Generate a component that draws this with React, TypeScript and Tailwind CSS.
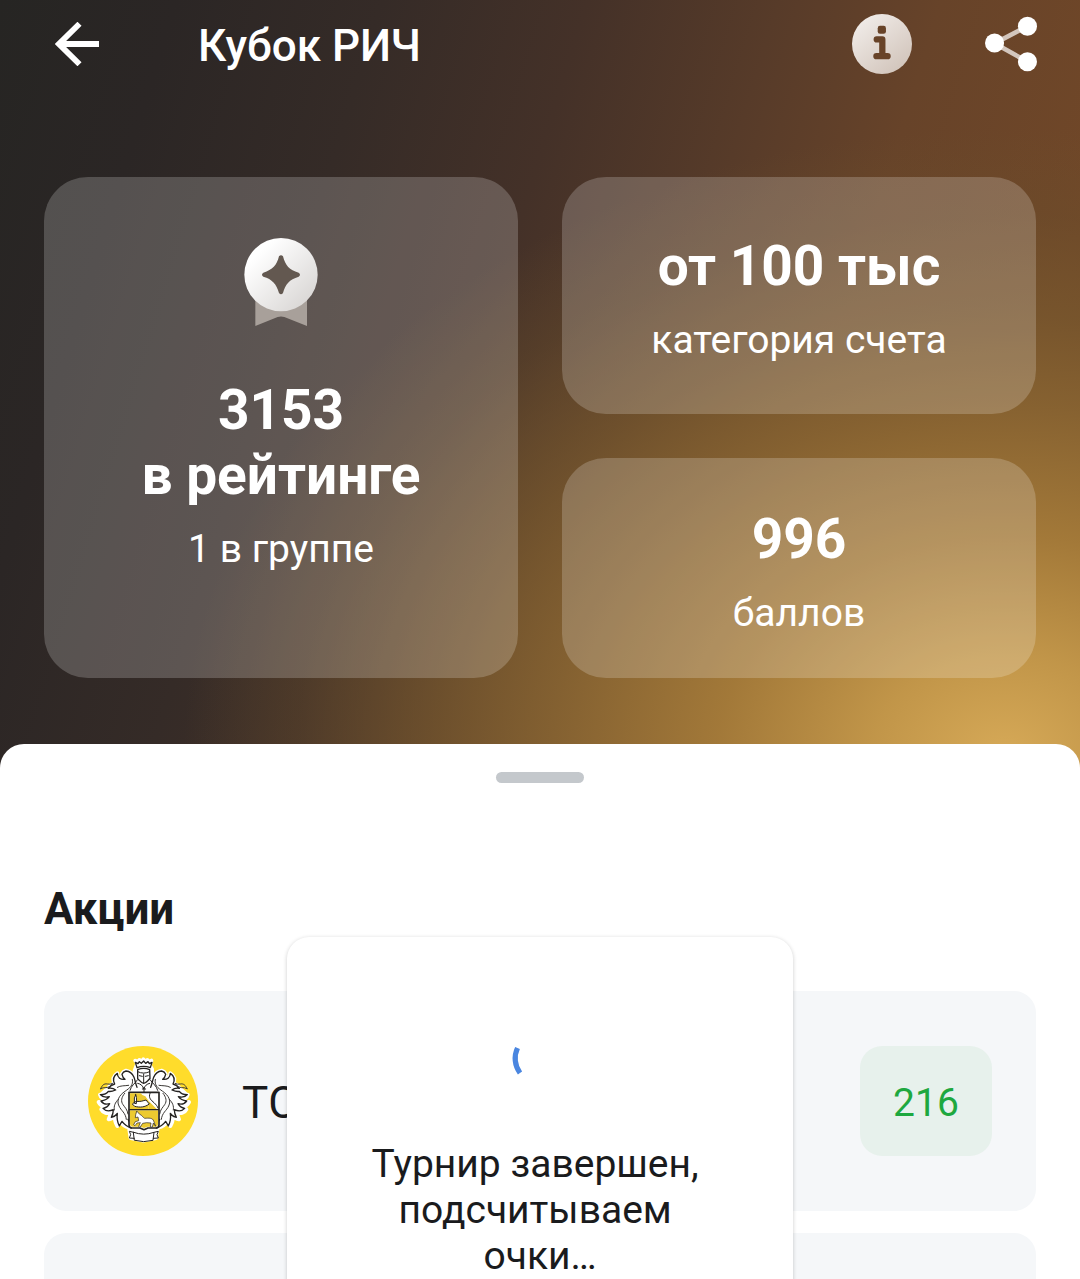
import * as React from 'react';

function BackIcon() {
  return (
    <svg viewBox="0 0 44 44" className="size-11" fill="none" stroke="#fff" strokeWidth="5.8">
      <path d="M44 22H4" />
      <path d="M24.500 1.800 4 22l20.500 20.200" />
    </svg>
  );
}

function InfoIcon() {
  return (
    <svg viewBox="155 41 182 182" className="size-15">
      <defs>
        <linearGradient id="info-fill" x1="0.1" y1="0" x2="0.9" y2="1">
          <stop offset="0" stopColor="#f3efec" />
          <stop offset="1" stopColor="#cfc1b7" />
        </linearGradient>
      </defs>
      <circle cx="246" cy="132" r="91" fill="url(#info-fill)" />
      <rect x="233" y="77" width="25" height="24" rx="7" fill="#684328" />
      <path
        d="M230 118h17v51M229 169h34"
        fill="none"
        stroke="#684328"
        strokeWidth="19"
        strokeLinecap="round"
        strokeLinejoin="round"
      />
    </svg>
  );
}

function ShareIcon() {
  return (
    <svg viewBox="555 50 158 166" className="h-14 w-13">
      <path d="M684 79 584 131l100 56" fill="none" stroke="#d3c6bd" strokeWidth="14" />
      <g fill="#fff">
        <circle cx="584" cy="130" r="29" />
        <circle cx="684" cy="79" r="29" />
        <circle cx="684" cy="187" r="29" />
      </g>
    </svg>
  );
}

function MedalIcon() {
  return (
    <svg viewBox="73 54 220 264" className="h-22 w-[74px]">
      <defs>
        <linearGradient id="medal-fill" x1="0" y1="0" x2="1" y2="1">
          <stop offset="0.2" stopColor="#fff" />
          <stop offset="1" stopColor="#d3d0ce" />
        </linearGradient>
      </defs>
      <path d="M106 235h155v83l-68-27q-10-3-20 0l-67 27Z" fill="#a8a09a" />
      <circle cx="183" cy="164" r="110" fill="url(#medal-fill)" />
      <path
        d="M177 109q6-7 12 0c7 28 19 41 47 49q8 6 0 12c-28 9-40 22-47 49q-6 8-12 0c-8-28-20-41-47-49q-8-6 0-12c28-9 40-21 47-49Z"
        fill="#635850"
      />
    </svg>
  );
}

function CrestHalf() {
  return (
    <g strokeLinejoin="round" strokeLinecap="round">
      <path
        d="M204 178c-8-10-8-24-12-36-4-10-12-18-24-20q-8 2-12 10 2 12 8 16c-12 2-22-6-22-18-12 8-14 20-8 32-8 0-14 4-18 10 8-2 14-2 20 2-12 4-20 0-26 4l-14 14c10-2 14 2 26-4-12 10-20 8-32 6q4 12 16 16c-6 6-12 8-20 6 6 12 14 14 26 12-6 8-10 10-18 10 6 12 18 14 28 8 0 10-2 14-6 22 10-2 14-6 18-12 0 10 2 22 8 32q4-8 8-14c6 8 14 16 26 18V186Z"
        fill="#fff"
        stroke="#fff"
        strokeWidth="12"
      />
      <path
        d="M201 172c-4-10-6-22-9-30-4-10-12-18-24-19q-9 2-12 10 2 10 9 15c-13 2-23-5-23-18-12 8-14 20-8 32M134 162q-12 3-19 13 14-2 22 5-14 6-22 4-6 10-24 10 8 10 27 6-8 11-25 13 9 13 26 8-7 12-20 14c9 10 20 9 31 4 0 10-2 15-6 23 10-2 14-6 18-12-2 14 0 26 6 38q4-8 8-14c6 8 14 16 28 20q-2-16-10-26"
        fill="none"
        stroke="#252321"
        strokeWidth="4"
      />
      <path
        d="M92 176c4-10 10-16 20-14q8 2 16-2-8 14-20 13-9-1-16 3ZM187 148c4 18-8 26-22 36-18 12-26 28-18 44 6 14 20 20 22 40M176 166c-12 2-24 0-34 6M145 208c-10 10-14 20-12 32M164 190c-10 12-12 24-5 34 6 9 13 14 15 28"
        fill="none"
        stroke="#3b3835"
        strokeWidth="3"
      />
    </g>
  );
}

function CrestLogo() {
  return (
    <svg viewBox="54 48 330 330" className="size-[110px] shrink-0" role="img" aria-label="ТКС">
      <circle cx="219" cy="213" r="165" fill="#ffdc2b" />
      <path
        d="M202 100 196 92l8 4 4-6 6 6 6-8 6 8 6-6 4 6 8-4-5 14 7 12v32l24 22v112l-28 10 20 4-4 26-38 8-38-8-4-26 20-4-28-10V178l24-22v-34Z"
        fill="#fff"
        stroke="#fff"
        strokeWidth="12"
        strokeLinejoin="round"
      />
      <CrestHalf />
      <g transform="translate(443 0) scale(-1 1)">
        <CrestHalf />
      </g>
      <g fill="none" stroke="#252321" strokeWidth="4" strokeLinejoin="round" strokeLinecap="round">
        <path d="m201 113-5-16 8 4 4-6 6 5 7-7 6 7 7-5 4 6 8-4-5 16q-20-8-40 0Z" fill="#fff" />
        <path d="M203 119q18-8 36 0l1 27c-7 5-11 13-19 14-8-1-12-9-18-14Z" fill="#fff" />
        <path d="M203 125q18 9 36 0M221 132v27M208 137l9 2M226 139l9-2M202 150c-8 12-18 16-22 31M241 150c8 12 18 16 22 31M203 160c10 2 15 7 18 17 4-10 9-15 18-17M222 172v14M217 177h10" strokeWidth="3" />
        <path d="M177 187h90v98q0 9-9 9h-24l-12 5-12-5h-24q-9 0-9-9Z" fill="#fff" strokeWidth="5" />
        <path d="M180 190h32q5 8 14 9l10 14v24h-56ZM180 241h84v42q0 7-7 7h-24l-11 4-11-4h-24q-7 0-7-7Z" fill="#ecca30" stroke="none" />
        <path d="M236 213l24 24h-24Z" fill="#ecca30" stroke="none" />
        <path d="M178 239h88" strokeWidth="4" />
        <path d="M197 194q4 4 2 27l-6-1q-2-19 4-26ZM199 214c14 2 20-2 29-4l10 12c-14 10-28 11-44 7l-7-7q5-5 12-8Z" fill="#fff" strokeWidth="3" />
        <path d="M240 190c-6 14 4 21 12 28 6 6 10 10 12 16" strokeWidth="3" />
        <path
          d="m201 244 8 9c7 2 9 9 15 12 12-1 24-2 27 8l6 16-7-10-3 12h-6l2-12-13-1-12 2-8 12-4-2 5-12-10 1-6 8-4-3 5-9 10-3-2-11-8 2 1-8Z"
          fill="#fff"
          strokeWidth="2"
        />
        <path d="M191 307q30 11 61 0l-3 24q-28 8-55 0ZM191 307l-13-3 4 10-4 10 15 1M252 307l13-3-4 10 4 10-15 1" fill="#fff" strokeWidth="3" />
      </g>
    </svg>
  );
}

function Spinner() {
  return (
    <svg viewBox="0 0 58 58" className="size-[58px]" role="status" aria-label="Загрузка">
      <path d="M6.500 21A24.500 24.500 0 0 0 9 46" fill="none" stroke="#4a86e0" strokeWidth="5.200" />
    </svg>
  );
}

function StatCard({ value, label, className }: { value: string; label: string; className: string }) {
  return (
    <div className={`rounded-[44px] bg-white/20 text-center ${className}`}>
      <p className="text-[55px] leading-[65px] font-bold">{value}</p>
      <p className="mt-[18px] text-[39px] leading-[46px]">{label}</p>
    </div>
  );
}

const stocks = [
  { name: 'ТCS Group', score: 216 },
  { name: '', score: null },
];

export default function App() {
  return (
    <div className="relative flex h-screen flex-col overflow-hidden bg-[#262523] bg-[radial-gradient(ellipse_76%_49%_at_93%_59%,#d6a957_0%,#c4984af7_16%,#a77d3aeb_35%,#8a6632d9_56%,#7a5a2eb3_70%,#6b502c59_86%,#64482a00_100%),linear-gradient(107deg,#262523_0%,#2b2625_12%,#352b27_26%,#443128_40%,#573b29_53%,#674329_64%,#704728_78%,#6c4528_100%)] font-[Roboto,sans-serif] text-white">
      <header className="flex h-[88px] shrink-0 items-center pr-[43px] pl-[55px]">
        <button type="button" aria-label="Назад">
          <BackIcon />
        </button>
        <h1 className="ml-[99px] flex-1 pt-1 text-[44px] leading-[52px] font-medium">Кубок РИЧ</h1>
        <button type="button" aria-label="Информация">
          <InfoIcon />
        </button>
        <button type="button" aria-label="Поделиться" className="ml-[73px]">
          <ShareIcon />
        </button>
      </header>

      <section className="mt-[89px] grid grid-cols-2 gap-11 px-11">
        <div className="flex flex-col items-center rounded-[44px] bg-white/20 pt-[61px] text-center">
          <MedalIcon />
          <p className="mt-[52px] text-[55px] leading-[65px] font-bold">
            3153
            <br />в рейтинге
          </p>
          <p className="mt-[18px] text-[39px] leading-[46px]">1 в группе</p>
        </div>
        <div className="flex flex-col gap-11">
          <StatCard value="от 100 тыс" label="категория счета" className="pt-[57px] pb-[51px]" />
          <StatCard value="996" label="баллов" className="pt-[49px] pb-[42px]" />
        </div>
      </section>

      <main className="relative mt-[66px] flex-1 rounded-t-[24px] bg-white px-11 pt-7 text-[#1a1b1d]">
        <div className="mx-auto h-[11px] w-22 rounded-full bg-[#c4c8cc]" />
        <h2 className="mt-[100px] text-[44px] leading-[52px] font-bold">Акции</h2>
        <ul className="mt-14 flex flex-col gap-[22px]">
          {stocks.map((stock, i) => (
            <li key={i} className="flex h-[220px] items-center gap-11 rounded-[22px] bg-[#f5f7f9] px-11">
              {stock.score !== null && (
                <>
                  <CrestLogo />
                  <span className="flex-1 pt-1 text-[44px] leading-[52px]">{stock.name}</span>
                  <span className="flex h-[110px] w-33 items-center justify-center rounded-[22px] bg-[#e7f1ec] pt-1 text-[39px] leading-[46px] text-[#1ea83f]">
                    {stock.score}
                  </span>
                </>
              )}
            </li>
          ))}
        </ul>

        <div
          role="dialog"
          aria-label="Турнир завершен"
          className="absolute top-[193px] left-1/2 flex w-[506px] -translate-x-1/2 flex-col items-center rounded-[22px] bg-white pt-[90px] pb-22 shadow-[0_1px_4px_rgba(0,0,0,0.2)]"
        >
          <Spinner />
          <p className="mt-14 text-center text-[39px] leading-[46px] whitespace-pre">
            {'Турнир завершен, \nподсчитываем \nочки…'}
          </p>
        </div>
      </main>
    </div>
  );
}
